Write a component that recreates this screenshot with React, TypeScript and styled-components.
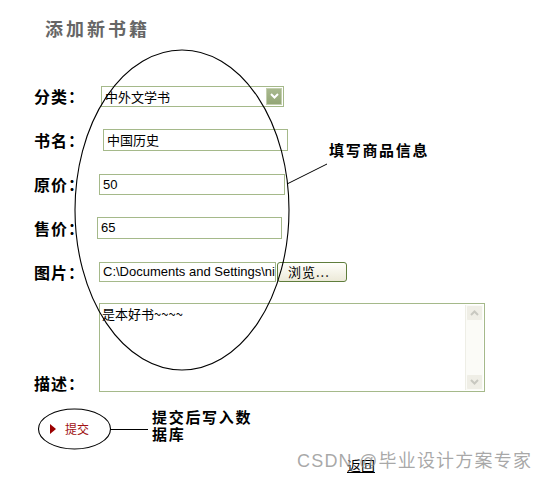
import React from 'react'
import styled, { createGlobalStyle } from 'styled-components'

const GlobalStyle = createGlobalStyle`
  body {
    margin: 0;
    background: #fff;
    font-family: "Liberation Sans", "Noto Sans CJK SC", sans-serif;
  }
`

const Page = styled.div`
  position: relative;
  width: 543px;
  height: 481px;
  overflow: hidden;
  background: #fff;
`

const Title = styled.div`
  padding: 17px 0 0 45px;
  height: 22px;
  line-height: 22px;
  font-size: 18px;
  font-weight: bold;
  color: #666;
  letter-spacing: 3px;
  font-family: "Noto Sans CJK SC", sans-serif;
`

const Form = styled.div`
  margin-top: 35px;
  padding-left: 34px;
`

const Row = styled.div<{ $h?: number; $align?: string; $top?: number }>`
  display: flex;
  align-items: ${p => p.$align || 'center'};
  height: ${p => p.$h || 44}px;
  margin-top: ${p => p.$top || 0}px;
`

const Label = styled.div<{ $w: number }>`
  width: ${p => p.$w}px;
  flex: none;
  font-size: 16px;
  line-height: 18px;
  font-weight: bold;
  color: #000;
  letter-spacing: 1px;
  font-family: "Noto Sans CJK SC", sans-serif;
`

const Select = styled.div`
  box-sizing: border-box;
  width: 183px;
  height: 21px;
  border: 1px solid #a5b98a;
  display: flex;
  align-items: center;
  justify-content: space-between;
  padding: 0 1px 0 3px;
  font-size: 13px;
  font-family: "Noto Sans CJK SC", sans-serif;
`

const DropBtn = styled.div`
  box-sizing: border-box;
  width: 16px;
  height: 17px;
  background: linear-gradient(#a9b98f, #93a676);
  border: 1px solid #c3cfae;
  display: flex;
  align-items: center;
  justify-content: center;
`

const TextBox = styled.div<{ $w: number; $h: number }>`
  box-sizing: border-box;
  width: ${p => p.$w}px;
  height: ${p => p.$h}px;
  border: 1px solid #a5b98a;
  padding: 0 3px;
  font-size: 13px;
  line-height: ${p => p.$h - 2}px;
  white-space: nowrap;
  overflow: hidden;
  font-family: "Liberation Sans", "Noto Sans CJK SC", sans-serif;
`

const Browse = styled.div`
  box-sizing: border-box;
  margin-left: 1px;
  width: 70px;
  height: 20px;
  border: 1px solid #5f7d3c;
  border-radius: 3px;
  background: linear-gradient(#fffffb, #ece9d8);
  font-size: 13px;
  line-height: 18px;
  padding-left: 10px;
  letter-spacing: 1px;
  font-family: "Noto Sans CJK SC", sans-serif;
`

const Area = styled.div`
  box-sizing: border-box;
  width: 386px;
  height: 89px;
  border: 1px solid #a5b98a;
  display: flex;
  font-size: 13px;
  font-family: "Noto Sans CJK SC", sans-serif;
`

const AreaText = styled.div`
  flex: 1;
  padding: 2px 2px;
  line-height: 16px;
`

const ScrollBar = styled.div`
  width: 17px;
  margin: 1px 1px 1px 0;
  display: flex;
  flex-direction: column;
  background: #fbfbf7;
  border-left: 1px solid #eeeee6;
`

const ScrollBtn = styled.div`
  box-sizing: border-box;
  height: 16px;
  background: #efeee6;
  border: 1px solid #fbfbf7;
  border-radius: 2px;
  display: flex;
  align-items: center;
  justify-content: center;
`

const Track = styled.div`
  flex: 1;
`

const SubmitRow = styled.div`
  display: flex;
  align-items: center;
  height: 35px;
  margin-top: 19px;
  padding-left: 50px;
  gap: 9px;
`

const Arrow = styled.div`
  width: 0;
  height: 0;
  border-top: 5px solid transparent;
  border-bottom: 5px solid transparent;
  border-left: 6px solid #9b0000;
`

const SubmitText = styled.span`
  font-size: 12px;
  color: #a01010;
  font-family: "Noto Sans CJK SC", sans-serif;
`

const Back = styled.a`
  display: block;
  margin: 9px 0 0 347px;
  width: max-content;
  font-size: 14px;
  color: #000;
  text-decoration: underline;
  font-family: "Noto Sans CJK SC", sans-serif;
`

const Overlay = styled.svg`
  position: absolute;
  left: 0;
  top: 0;
  pointer-events: none;
`

const Note = styled.div<{ $x: number; $y: number }>`
  position: absolute;
  left: ${p => p.$x}px;
  top: ${p => p.$y}px;
  font-size: 15px;
  line-height: 17px;
  font-weight: bold;
  letter-spacing: 1.7px;
  color: #000;
  font-family: "Noto Sans CJK SC", sans-serif;
`

const Watermark = styled.div`
  position: absolute;
  left: 297px;
  top: 450px;
  font-size: 18px;
  line-height: 22px;
  color: rgba(140, 140, 140, 0.75);
  letter-spacing: 1.2px;
  font-family: "Liberation Sans", "Noto Sans CJK SC", sans-serif;
`

const Chevron = ({ color, up }: { color: string; up?: boolean }) => (
  <svg width="9" height="6" viewBox="0 0 9 6">
    <path d={up ? 'M1 5 L4.5 1.5 L8 5' : 'M1 1 L4.5 4.5 L8 1'} fill="none" stroke={color} strokeWidth="2" />
  </svg>
)

export default function App() {
  return (
    <Page>
      <GlobalStyle />
      <Title>添加新书籍</Title>
      <Form>
        <Row>
          <Label $w={67}>分类：</Label>
          <Select>
            <span>中外文学书</span>
            <DropBtn><Chevron color="#fff" /></DropBtn>
          </Select>
        </Row>
        <Row>
          <Label $w={69}>书名：</Label>
          <TextBox $w={185} $h={22} style={{ fontFamily: '"Noto Sans CJK SC", sans-serif' }}>中国历史</TextBox>
        </Row>
        <Row>
          <Label $w={65}>原价：</Label>
          <TextBox $w={186} $h={21}>50</TextBox>
        </Row>
        <Row>
          <Label $w={63}>售价：</Label>
          <TextBox $w={185} $h={22}>65</TextBox>
        </Row>
        <Row>
          <Label $w={65}>图片：</Label>
          <TextBox $w={177} $h={20}>C:\Documents and Settings\ni</TextBox>
          <Browse>浏览...</Browse>
        </Row>
        <Row $h={89} $align="flex-end" $top={9}>
          <Label $w={65}>描述：</Label>
          <Area>
            <AreaText>是本好书~~~~</AreaText>
            <ScrollBar>
              <ScrollBtn><Chevron color="#c8c8c0" up /></ScrollBtn>
              <Track />
              <ScrollBtn><Chevron color="#c8c8c0" /></ScrollBtn>
            </ScrollBar>
          </Area>
        </Row>
      </Form>
      <SubmitRow>
        <Arrow />
        <SubmitText>提交</SubmitText>
      </SubmitRow>
      <Back>返回</Back>

      <Overlay width="543" height="481" viewBox="0 0 543 481">
        <ellipse cx="182" cy="210" rx="107" ry="160" fill="none" stroke="#000" strokeWidth="1.1" />
        <line x1="287" y1="184" x2="327" y2="164" stroke="#000" strokeWidth="1" />
        <ellipse cx="74.5" cy="429" rx="36" ry="20" fill="none" stroke="#000" strokeWidth="1.1" />
        <line x1="110" y1="429.5" x2="148" y2="429.5" stroke="#000" strokeWidth="1.2" />
      </Overlay>
      <Note $x={329} $y={141}>填写商品信息</Note>
      <Note $x={152} $y={408}>提交后写入数<br />据库</Note>
      <Watermark>CSDN @毕业设计方案专家</Watermark>
    </Page>
  )
}
